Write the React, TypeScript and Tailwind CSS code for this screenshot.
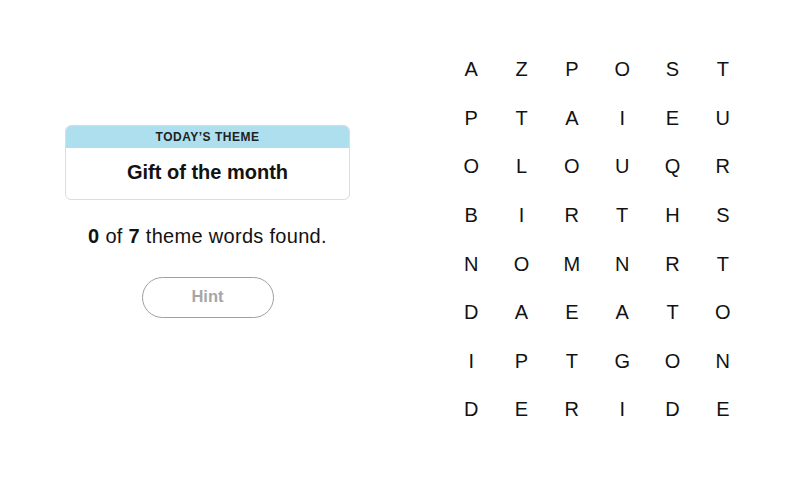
import React from 'react';

const rows = [
  'AZPOST',
  'PTAIEU',
  'OLOUQR',
  'BIRTHS',
  'NOMNRT',
  'DAEATO',
  'IPTGON',
  'DERIDE',
];

export default function App() {
  return (
    <div
      className="w-[800px] h-[477px] bg-white flex text-[#121212]"
      style={{ fontFamily: '"Liberation Sans", Arial, sans-serif' }}
    >
      {/* left side: theme card + hint */}
      <div className="w-[415px] pl-[65px] pt-[125px]">
        <div className="w-[285px] flex flex-col items-center">
          <div className="w-full border border-[#dcdcdc] rounded-[6px] overflow-hidden">
            <div className="h-[22px] bg-[#aedfee] flex items-center justify-center text-[12px] font-bold tracking-[0.5px] text-[#222]">
              TODAY&rsquo;S THEME
            </div>
            <div className="h-[51px] pb-[3px] flex items-center justify-center text-[20px] font-bold">
              Gift of the month
            </div>
          </div>
          <p className="mt-[24px] text-[20px] leading-[24px] tracking-[0.3px]">
            <b>0</b> of <b>7</b> theme words found.
          </p>
          <button className="mt-[29px] w-[132px] h-[41px] pb-[3px] rounded-full border border-[#a0a0a0] text-[#a6a6a6] font-bold text-[16.5px]">
            Hint
          </button>
        </div>
      </div>

      {/* right side: letter grid */}
      <div className="ml-[31px] pt-[45px]">
        <div className="grid grid-cols-6 w-[302px]">
          {rows.map((row, r) =>
            row.split('').map((ch, c) => (
              <div key={r + '-' + c} className="h-[48.6px] flex items-center justify-center text-[20px]">
                {ch}
              </div>
            ))
          )}
        </div>
      </div>
    </div>
  );
}
